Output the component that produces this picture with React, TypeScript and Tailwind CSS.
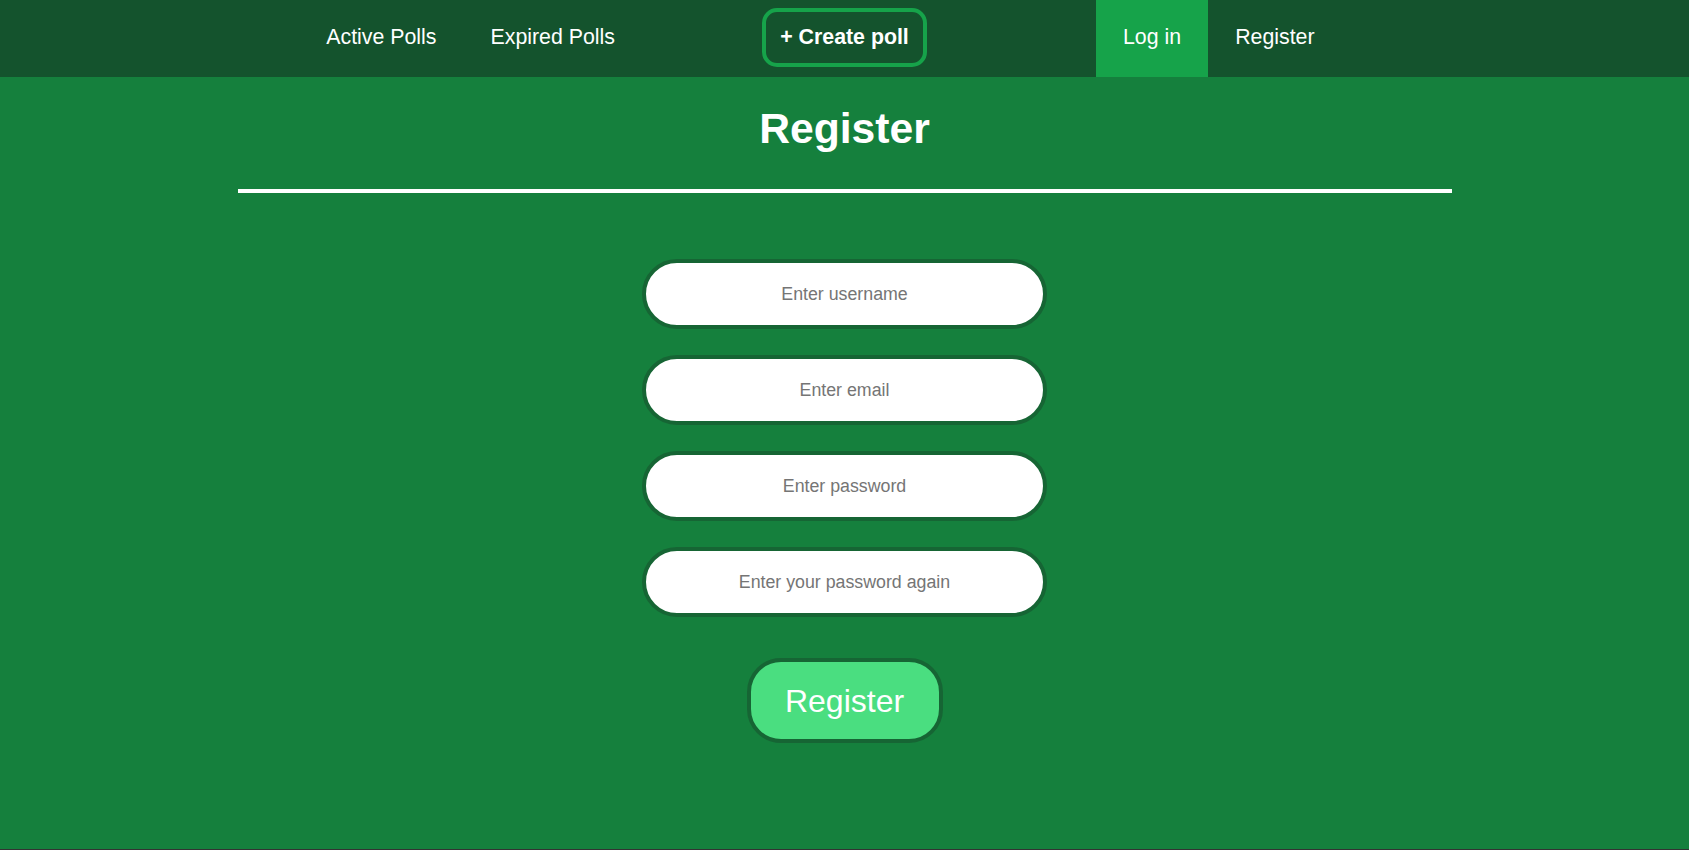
import React from "react";

export default function App() {
  const font = { fontFamily: '"Liberation Sans", Arial, sans-serif' };
  return (
    <div className="h-[850px] w-full bg-[#333333] flex flex-col" style={font}>
      <nav className="h-[77px] shrink-0 bg-[#14532d] grid grid-cols-[1fr_auto_1fr] text-white text-[21.33px]">
        <div className="flex justify-end items-stretch pr-[120px]">
          <a className="flex items-center px-[27px] pb-[2px] cursor-pointer">Active Polls</a>
          <a className="flex items-center px-[27px] pb-[2px] cursor-pointer">Expired Polls</a>
        </div>
        <div className="flex items-center">
          <button className="h-[59px] w-[165px] mt-[-2px] border-4 border-[#16a34a] rounded-[15px] font-bold text-white">
            + Create poll
          </button>
        </div>
        <div className="flex justify-start items-stretch pl-[169px]">
          <a className="flex items-center px-[27px] pb-[2px] bg-[#16a34a] cursor-pointer">Log in</a>
          <a className="flex items-center px-[27px] pb-[2px] cursor-pointer">Register</a>
        </div>
      </nav>
      <main className="h-[772px] shrink-0 bg-[#15803d] flex flex-col items-center text-white">
        <h1 className="mt-[19px] text-[42.67px] font-bold leading-normal">Register</h1>
        <div className="mt-[29px] h-[4px] w-[1214px] bg-white" />
        <form className="mt-[66px] flex flex-col items-center gap-[26px]" onSubmit={(e) => e.preventDefault()}>
          <input
            type="text"
            placeholder="Enter username"
            className="w-[405px] h-[70px] rounded-full border-4 border-[#166534] bg-white text-center text-[17.78px] text-black placeholder:text-[#757575] outline-none"
          />
          <input
            type="email"
            placeholder="Enter email"
            className="w-[405px] h-[70px] rounded-full border-4 border-[#166534] bg-white text-center text-[17.78px] text-black placeholder:text-[#757575] outline-none"
          />
          <input
            type="password"
            placeholder="Enter password"
            className="w-[405px] h-[70px] rounded-full border-4 border-[#166534] bg-white text-center text-[17.78px] text-black placeholder:text-[#757575] outline-none"
          />
          <input
            type="password"
            placeholder="Enter your password again"
            className="w-[405px] h-[70px] rounded-full border-4 border-[#166534] bg-white text-center text-[17.78px] text-black placeholder:text-[#757575] outline-none"
          />
          <button
            type="submit"
            className="mt-[15px] w-[196px] h-[85px] rounded-[34px] border-4 border-[#166534] bg-[#4ade80] text-white text-[32px]"
          >
            Register
          </button>
        </form>
      </main>
    </div>
  );
}
